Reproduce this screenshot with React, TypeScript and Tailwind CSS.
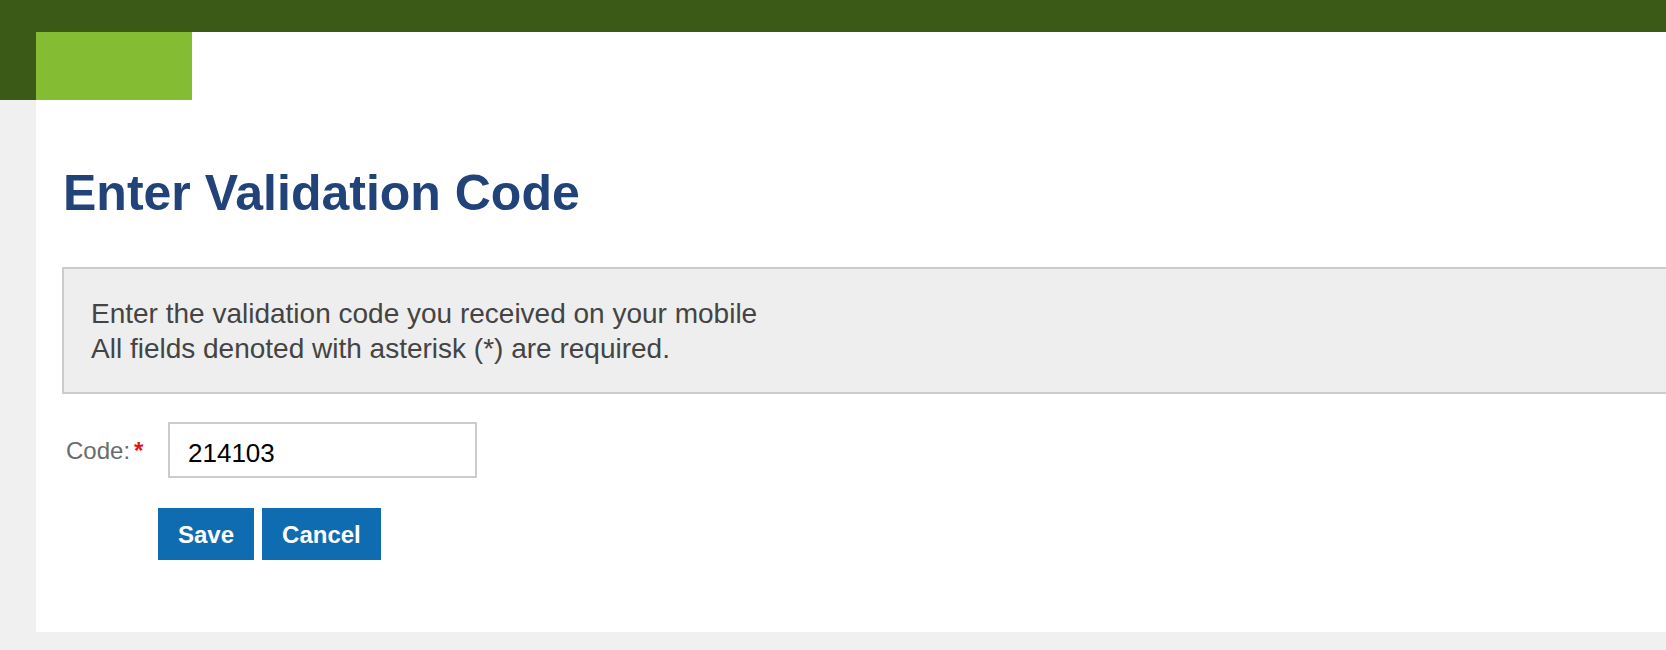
import { useState } from "react";

// Validation-code step: dark header strip, white content sheet, info box, one field + actions.
export default function App() {
  const [code, setCode] = useState("214103");

  return (
    <div className="min-h-screen overflow-hidden bg-[#f0f0f0] font-['Liberation_Sans',Arial,sans-serif]">
      <div className="h-8 bg-[#3c5a17]" />
      <div className="flex">
        {/* left gutter: green continues beside the logo block */}
        <div className="w-9 shrink-0">
          <div className="h-[68px] bg-[#3c5a17]" />
        </div>

        <div className="flex-1 bg-white pb-[72px]">
          <div className="h-[68px] w-[156px] bg-[#84bc33]" />

          <div className="pl-[26px]">
            <h1 className="mt-[65px] pl-[1px] text-[50px] font-bold leading-[56px] text-[#22427a]">Enter Validation Code</h1>

            <div className="mt-[46px] border-2 border-r-0 border-[#cccccc] bg-[#eeeeee] pb-[26px] pl-[27px] pt-[27px] text-[28px] leading-[35px] text-[#444444]">
              <p>Enter the validation code you received on your mobile</p>
              <p>All fields denoted with asterisk (*) are required.</p>
            </div>

            <div className="mt-[28px] flex items-center">
              <label htmlFor="code" className="flex w-[106px] shrink-0 items-start pl-[4px] pt-[2px] text-[24px] leading-[28px] text-[#6b6b6b]">
                Code:
                <span className="ml-[4px] mt-[3px] text-[24px] font-bold leading-[22px] text-[#e5121b]">*</span>
              </label>
              <input
                id="code"
                value={code}
                onChange={(e) => setCode(e.target.value)}
                className="box-border h-[56px] w-[309px] border-2 border-[#cccccc] bg-white pb-0 pl-[18px] pt-[6px] text-[26px] text-black outline-none"
              />
            </div>

            <div className="mt-[30px] flex gap-2 pl-[96px]">
              <button type="button" className="h-[52px] bg-[#106cb1] px-5 pt-[2px] text-[24px] font-bold text-white">
                Save
              </button>
              <button type="button" className="h-[52px] bg-[#106cb1] px-5 pt-[2px] text-[24px] font-bold text-white">
                Cancel
              </button>
            </div>
          </div>
        </div>
      </div>
    </div>
  );
}
